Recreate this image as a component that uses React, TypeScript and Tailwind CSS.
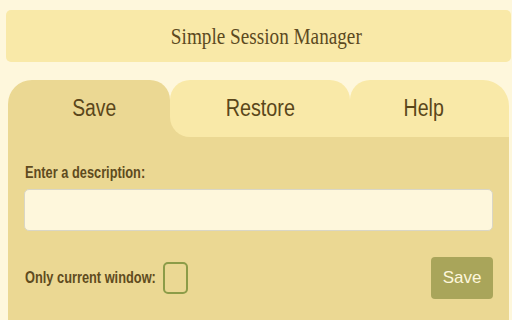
import React, { useState } from "react";

const tabs = ["Save", "Restore", "Help"];

const sans = "font-['Liberation_Sans',Arial,sans-serif]";

export default function App() {
    const [active, setActive] = useState(0);
    const [desc, setDesc] = useState("");
    const [onlyCurrent, setOnlyCurrent] = useState(false);

    return (
        <div className="w-[512px] h-[320px] overflow-hidden bg-[#fef7dc] pt-[10px]">
            {/* Title bar */}
            <header className="ml-[6px] w-[505px] h-[52px] rounded-[5px] bg-[#f9e9a8] flex items-center justify-center pl-[16px]">
                <h1 className="font-['Liberation_Serif',serif] text-[24px] leading-none text-[#5c4a1f] scale-x-[0.8] whitespace-nowrap">
                    Simple Session Manager
                </h1>
            </header>

            <div className="ml-[8px] w-[501px] mt-[18px]">
                {/* Tabs */}
                <div className="flex h-[57px] bg-[linear-gradient(#fef7dc_50%,#ebd893_50%)]">
                    <button
                        onClick={() => setActive(0)}
                        className={`w-[162px] pl-[10px] rounded-tl-[24px] rounded-tr-[20px] bg-[#ebd893] flex items-center justify-center text-[23px] text-[#5a461a] ${sans}`}
                    >
                        <span className="scale-x-[0.84]">{tabs[0]}</span>
                    </button>
                    <button
                        onClick={() => setActive(1)}
                        className={`w-[180px] rounded-tl-[20px] rounded-tr-[20px] rounded-bl-[20px] bg-[#f9e9a8] flex items-center justify-center text-[23px] text-[#5a461a] ${sans}`}
                    >
                        <span className="scale-x-[0.86]">{tabs[1]}</span>
                    </button>
                    <button
                        onClick={() => setActive(2)}
                        className={`flex-1 pr-[12px] rounded-tl-[20px] rounded-tr-[26px] bg-[#f9e9a8] flex items-center justify-center text-[23px] text-[#5a461a] ${sans}`}
                    >
                        <span className="scale-x-[0.85]">{tabs[2]}</span>
                    </button>
                </div>

                {/* Save panel */}
                <div className={`bg-[#ebd893] h-[200px] px-4 pt-[26px] ${sans}`} data-active={active}>
                    <label className="block pl-[1px] text-[16px] leading-[19px] font-bold text-[#5f4b1e] whitespace-nowrap">
                        <span className="inline-block origin-left scale-x-[0.8]">Enter a description:</span>
                    </label>
                    <input
                        value={desc}
                        onChange={(e) => setDesc(e.target.value)}
                        className="mt-[7px] block w-full h-[42px] rounded-[5px] border-[1.5px] border-[#d9d6c6] bg-[#fef7dc] px-3 outline-none"
                    />
                    <div className="mt-[26px] h-[42px] flex items-center">
                        <span className="w-[139px] pl-[1px] text-[16px] font-bold text-[#5f4b1e] whitespace-nowrap">
                            <span className="inline-block origin-left scale-x-[0.8]">Only current window:</span>
                        </span>
                        <button
                            onClick={() => setOnlyCurrent(!onlyCurrent)}
                            className="w-[25px] h-[32px] rounded-[5px] border-2 border-[#8c9c48]"
                            aria-label="Only current window"
                        >
                            {onlyCurrent && <span className="text-[#8c9c48]">✓</span>}
                        </button>
                        <button className="ml-auto w-[62px] h-[42px] rounded-[4px] bg-[#a9a55a] text-[#fef7dc] text-[17px] font-['Liberation_Sans',Arial,sans-serif]">
                            Save
                        </button>
                    </div>
                </div>
            </div>
        </div>
    );
}
